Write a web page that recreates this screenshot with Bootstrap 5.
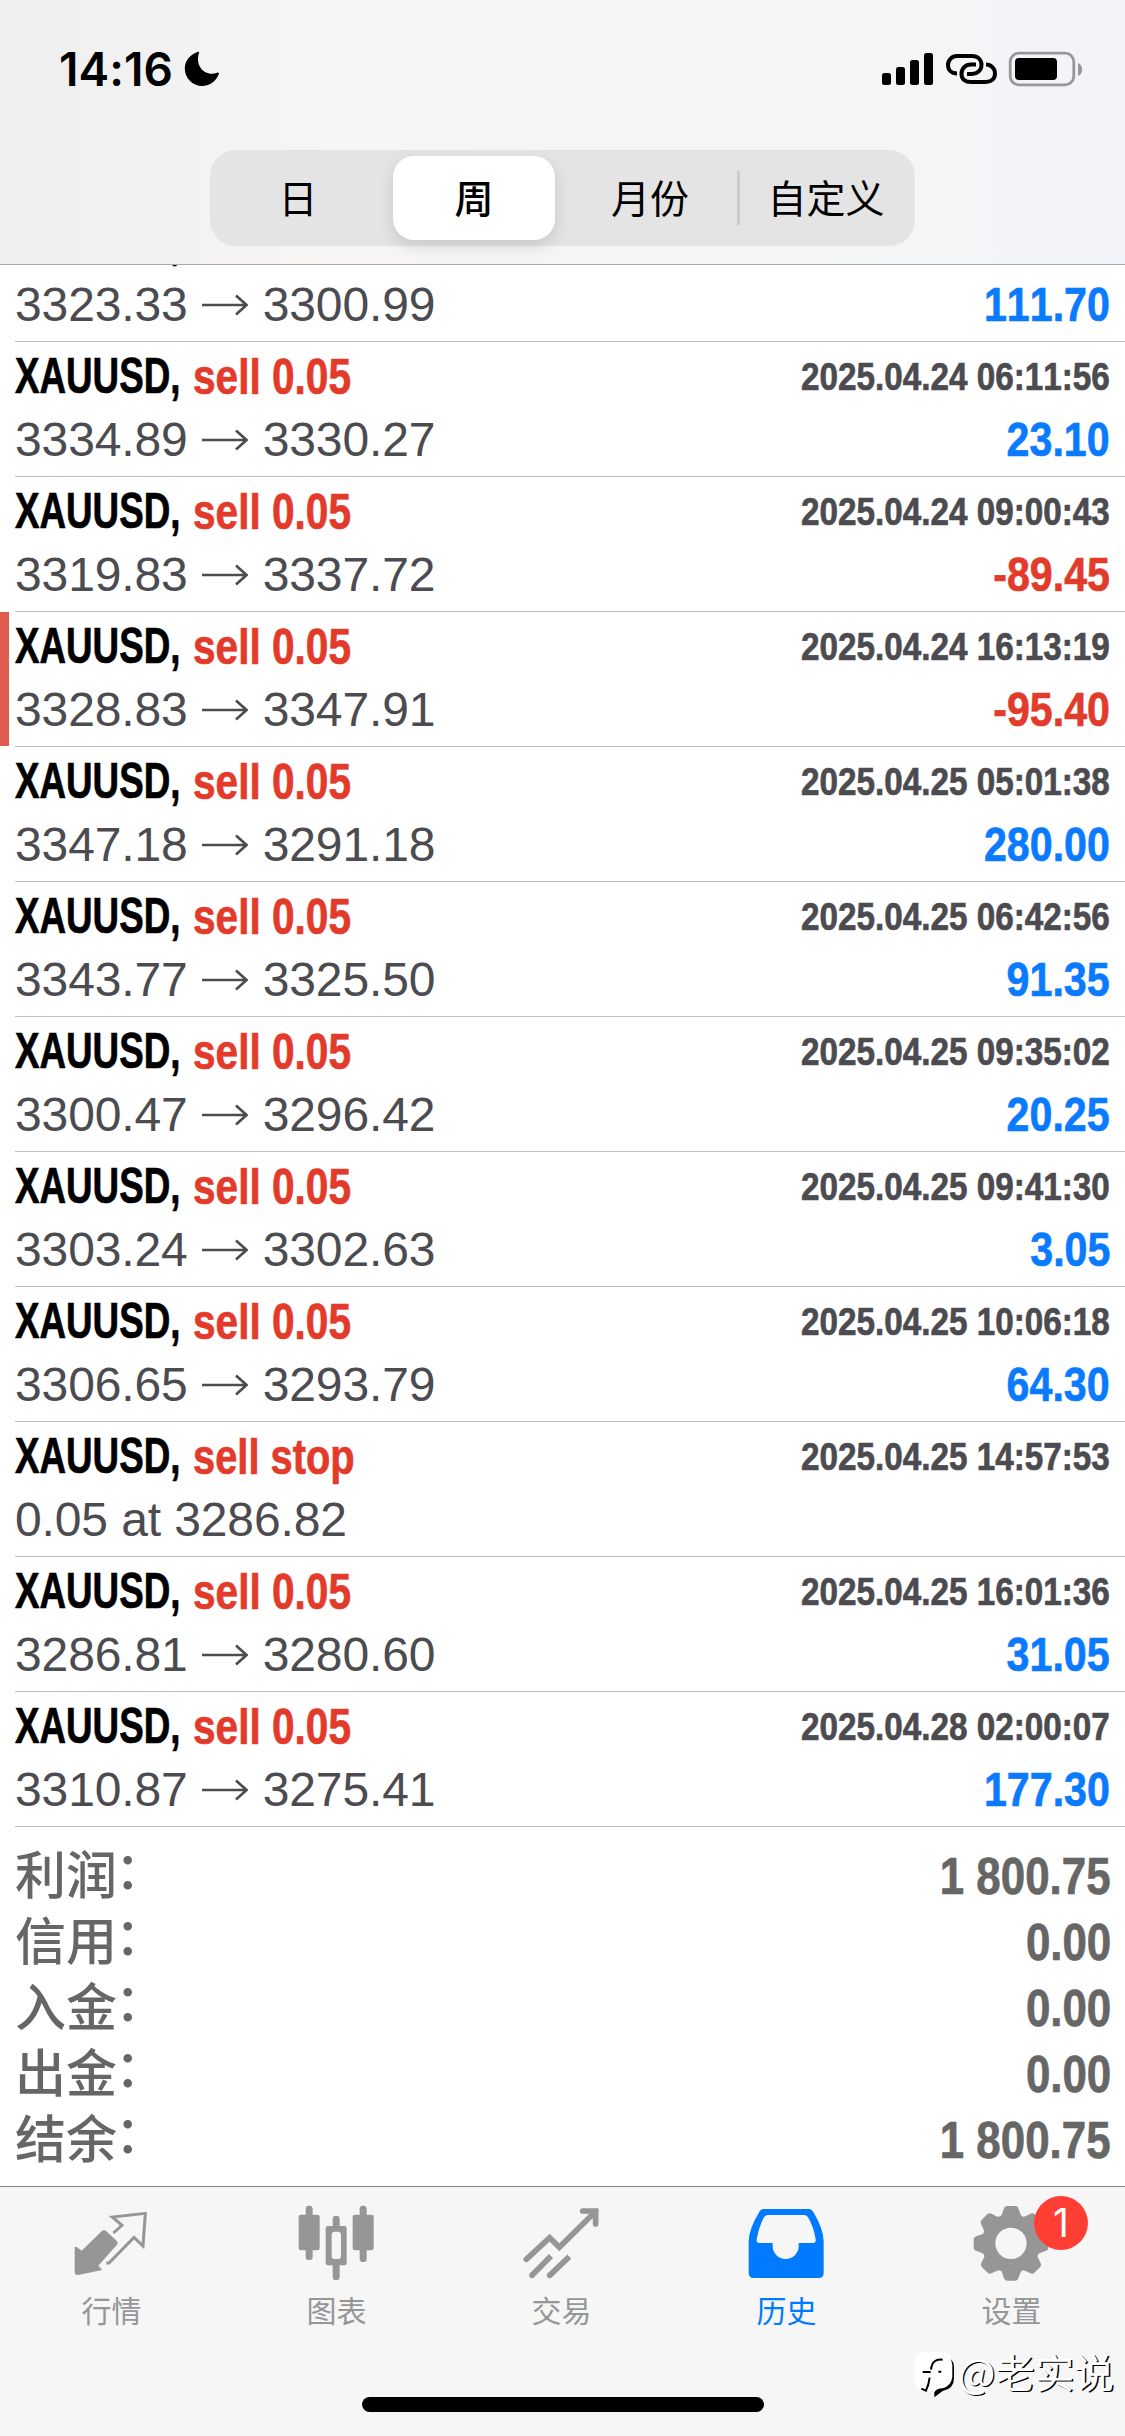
<!DOCTYPE html>
<html lang="zh-CN">
<head>
<meta charset="utf-8">
<meta name="viewport" content="width=device-width, initial-scale=1">
<title>历史</title>
<link rel="stylesheet" href="https://cdn.jsdelivr.net/npm/bootstrap@5.3.0/dist/css/bootstrap.min.css">
<style>
body{width:1125px;height:2436px;overflow:hidden;background:#fff;font-family:"Liberation Sans","Noto Sans CJK SC",sans-serif;color:#000}
svg{display:block;flex:none}
.top-bar{height:265px;border-bottom:1px solid #a9a9ac;background:linear-gradient(90deg,#efefef 0,#f2f1f1 14%,#f7f4f4 27%,#f6f5f5 42%,#f5f5f5 60%,#f4f5f6 80%,#f2f4f9 100%)}
.status-line{height:150px;padding:37px 42px 0 59px}
.clock{font:600 46px/64px Inter,sans-serif;width:125px;letter-spacing:.1px}
.moon{margin-top:14px}
.indicators{margin-top:12px}
.segments{width:705px;height:96px;border-radius:26px;background:#e5e4e5;font:39px/1 "Noto Sans CJK SC",sans-serif}
.segment{width:176px;height:84px;padding-bottom:4px;display:flex;align-items:center;justify-content:center}
.segment.chosen{width:162px;margin:0 7px;background:#fff;border-radius:21px;font-weight:500;box-shadow:0 6px 16px rgba(0,0,0,.13)}
.segment-rule{width:3px;height:54px;margin:0 -1.5px;background:#cbcbcd}
.deals{height:1921px;overflow:hidden}
.deal{height:135px;position:relative}
.deal-body{margin-left:15px;padding-right:15px;height:135px;border-bottom:1px solid #c0c0c2}
.deal.cut{margin-top:-58px}
.deal.flagged::before{content:"";position:absolute;left:0;top:0;width:9px;height:134px;background:#de5c4e}
.line-a{height:68px;line-height:69px}
.line-b{height:59px;line-height:59px}
.nar{display:inline-block;white-space:pre;font-weight:700;font-kerning:none;-webkit-text-stroke:.7px currentColor;transform-origin:0 50%}
.sym{width:178px;font-size:50px;transform:scaleX(.735)}
.side{font-size:49.5px;color:#e33b2b;transform:scaleX(.82)}
.side.pending{transform:scaleX(.805)}
.when{font-size:39.5px;color:#4b4b50;transform:scaleX(.842);transform-origin:100% 50%}
.gain,.loss{font-size:49px;color:#0a7aff;transform:scaleX(.84);transform-origin:100% 50%}
.loss{color:#e33b2b}
.prices{font-size:48px;color:#4b4b50;letter-spacing:-.12px}
.prices svg{margin:0 15px 0 14px}
.totals{padding:17px 14px 0 15px;color:#666}
.total{height:66px;line-height:66px;font-size:51px}
.total .nar{transform:scaleX(.86);transform-origin:100% 50%}
.total .name{font-weight:500;font-size:51px}
.colon{display:inline-block;transform:translate(-2px,-5px)}
.tab-bar{height:250px;border-top:1px solid #88888a;background:#f6f6f6;position:relative}
.tab{width:225px;padding-top:13px;padding-right:2px;color:#969696;font:30px/44px "Noto Sans CJK SC",sans-serif;position:relative;text-align:center}
.tab.current{color:#007aff}
.tab svg{margin:0 auto 2px}
.count{position:absolute;left:134px;top:9px;width:54px;height:54px;border-radius:50%;background:#ff3f34;color:#fff;font:400 39px/54px Inter,sans-serif}
.home{width:402px;height:15px;border-radius:8px;background:#000;position:absolute;left:362px;top:210px}
.author{position:absolute;left:914px;top:156px;height:56px;color:#fff;font:39.5px/56px "Noto Sans CJK SC",sans-serif;text-shadow:1.3px 1.3px 0 #000}
.author svg{margin:8px 2px 0 0}
</style>
</head>
<body>
<svg width="0" height="0" class="position-absolute"><symbol id="to" viewBox="0 0 46 24"><path d="M0 12H44M34 2.5L44.5 12L34 21.5" fill="none" stroke="#4b4b50" stroke-width="2.6"/></symbol></svg>

<header class="top-bar">
  <div class="status-line d-flex align-items-start">
    <div class="clock">14:16</div>
    <svg class="moon" width="36" height="36" viewBox="0 0 36 36"><path d="M14.5.8C6.500 3 .8 9.500.8 17.500C.8 27 8.500 35 18 35C26 35 32.500 30 35 22.500C34.700 21.600 34 21.400 33 21.800C22 26 10.500 16 15 2C15.300 1 15.200.6 14.500.8Z"/></svg>
    <svg class="indicators ms-auto" width="202" height="40" viewBox="881 49 202 40">
      <g><rect x="882" y="73" width="9" height="12" rx="2.500"/><rect x="896" y="67" width="9" height="18" rx="2.500"/><rect x="910" y="60" width="9" height="25" rx="2.500"/><rect x="924" y="53" width="9" height="32" rx="2.500"/></g>
      <g fill="none" stroke="#000" stroke-width="4"><path d="M957 73.500C951.500 73.500 948 70 948 65C948 60 952 56 957 56H972C978 56 981.500 60 981.500 65C981.500 70.500 977 74 972 74H967"/><path d="M986 64.500C991 64.500 995 68.500 995 73.500C995 79 991 82 986 82H971C965 82 961.500 79 961.500 74C961.500 68.500 965.500 64.500 971 64.500H976"/></g>
      <rect x="1010.200" y="53.200" width="63.600" height="31.600" rx="8.500" fill="none" stroke="#98989b" stroke-width="2.800"/><rect x="1015" y="58" width="42" height="22" rx="4"/><path d="M1078 63C1083.500 65 1083.500 74 1078 76Z" fill="#98989b"/>
    </svg>
  </div>
  <div class="segments d-flex align-items-center mx-auto">
    <div class="segment">日</div><div class="segment chosen">周</div><div class="segment">月份</div><div class="segment-rule"></div><div class="segment">自定义</div>
  </div>
</header>

<main class="deals">
  <div class="deal cut"><div class="deal-body">
    <div class="line-a d-flex"><span class="nar sym">XAUUSD,</span></div>
    <div class="line-b d-flex justify-content-between"><div class="prices d-flex align-items-center">3323.33<svg width="46" height="24"><use href="#to"/></svg>3300.99</div><span class="nar gain">111.70</span></div>
  </div></div>
  <div class="deal"><div class="deal-body">
    <div class="line-a d-flex"><span class="nar sym">XAUUSD,</span><span class="nar side">sell 0.05</span><span class="nar when ms-auto">2025.04.24 06:11:56</span></div>
    <div class="line-b d-flex justify-content-between"><div class="prices d-flex align-items-center">3334.89<svg width="46" height="24"><use href="#to"/></svg>3330.27</div><span class="nar gain">23.10</span></div>
  </div></div>
  <div class="deal"><div class="deal-body">
    <div class="line-a d-flex"><span class="nar sym">XAUUSD,</span><span class="nar side">sell 0.05</span><span class="nar when ms-auto">2025.04.24 09:00:43</span></div>
    <div class="line-b d-flex justify-content-between"><div class="prices d-flex align-items-center">3319.83<svg width="46" height="24"><use href="#to"/></svg>3337.72</div><span class="nar loss">-89.45</span></div>
  </div></div>
  <div class="deal flagged"><div class="deal-body">
    <div class="line-a d-flex"><span class="nar sym">XAUUSD,</span><span class="nar side">sell 0.05</span><span class="nar when ms-auto">2025.04.24 16:13:19</span></div>
    <div class="line-b d-flex justify-content-between"><div class="prices d-flex align-items-center">3328.83<svg width="46" height="24"><use href="#to"/></svg>3347.91</div><span class="nar loss">-95.40</span></div>
  </div></div>
  <div class="deal"><div class="deal-body">
    <div class="line-a d-flex"><span class="nar sym">XAUUSD,</span><span class="nar side">sell 0.05</span><span class="nar when ms-auto">2025.04.25 05:01:38</span></div>
    <div class="line-b d-flex justify-content-between"><div class="prices d-flex align-items-center">3347.18<svg width="46" height="24"><use href="#to"/></svg>3291.18</div><span class="nar gain">280.00</span></div>
  </div></div>
  <div class="deal"><div class="deal-body">
    <div class="line-a d-flex"><span class="nar sym">XAUUSD,</span><span class="nar side">sell 0.05</span><span class="nar when ms-auto">2025.04.25 06:42:56</span></div>
    <div class="line-b d-flex justify-content-between"><div class="prices d-flex align-items-center">3343.77<svg width="46" height="24"><use href="#to"/></svg>3325.50</div><span class="nar gain">91.35</span></div>
  </div></div>
  <div class="deal"><div class="deal-body">
    <div class="line-a d-flex"><span class="nar sym">XAUUSD,</span><span class="nar side">sell 0.05</span><span class="nar when ms-auto">2025.04.25 09:35:02</span></div>
    <div class="line-b d-flex justify-content-between"><div class="prices d-flex align-items-center">3300.47<svg width="46" height="24"><use href="#to"/></svg>3296.42</div><span class="nar gain">20.25</span></div>
  </div></div>
  <div class="deal"><div class="deal-body">
    <div class="line-a d-flex"><span class="nar sym">XAUUSD,</span><span class="nar side">sell 0.05</span><span class="nar when ms-auto">2025.04.25 09:41:30</span></div>
    <div class="line-b d-flex justify-content-between"><div class="prices d-flex align-items-center">3303.24<svg width="46" height="24"><use href="#to"/></svg>3302.63</div><span class="nar gain">3.05</span></div>
  </div></div>
  <div class="deal"><div class="deal-body">
    <div class="line-a d-flex"><span class="nar sym">XAUUSD,</span><span class="nar side">sell 0.05</span><span class="nar when ms-auto">2025.04.25 10:06:18</span></div>
    <div class="line-b d-flex justify-content-between"><div class="prices d-flex align-items-center">3306.65<svg width="46" height="24"><use href="#to"/></svg>3293.79</div><span class="nar gain">64.30</span></div>
  </div></div>
  <div class="deal"><div class="deal-body">
    <div class="line-a d-flex"><span class="nar sym">XAUUSD,</span><span class="nar side pending">sell stop</span><span class="nar when ms-auto">2025.04.25 14:57:53</span></div>
    <div class="line-b d-flex"><div class="prices">0.05 at 3286.82</div></div>
  </div></div>
  <div class="deal"><div class="deal-body">
    <div class="line-a d-flex"><span class="nar sym">XAUUSD,</span><span class="nar side">sell 0.05</span><span class="nar when ms-auto">2025.04.25 16:01:36</span></div>
    <div class="line-b d-flex justify-content-between"><div class="prices d-flex align-items-center">3286.81<svg width="46" height="24"><use href="#to"/></svg>3280.60</div><span class="nar gain">31.05</span></div>
  </div></div>
  <div class="deal"><div class="deal-body">
    <div class="line-a d-flex"><span class="nar sym">XAUUSD,</span><span class="nar side">sell 0.05</span><span class="nar when ms-auto">2025.04.28 02:00:07</span></div>
    <div class="line-b d-flex justify-content-between"><div class="prices d-flex align-items-center">3310.87<svg width="46" height="24"><use href="#to"/></svg>3275.41</div><span class="nar gain">177.30</span></div>
  </div></div>
  <div class="totals">
    <div class="total d-flex justify-content-between"><span class="name">利润<span class="colon">：</span></span><span class="nar">1 800.75</span></div>
    <div class="total d-flex justify-content-between"><span class="name">信用<span class="colon">：</span></span><span class="nar">0.00</span></div>
    <div class="total d-flex justify-content-between"><span class="name">入金<span class="colon">：</span></span><span class="nar">0.00</span></div>
    <div class="total d-flex justify-content-between"><span class="name">出金<span class="colon">：</span></span><span class="nar">0.00</span></div>
    <div class="total d-flex justify-content-between"><span class="name">结余<span class="colon">：</span></span><span class="nar">1 800.75</span></div>
  </div>
</main>

<nav class="tab-bar">
  <div class="d-flex">
    <div class="tab">
      <svg width="90" height="85" viewBox="202 90 270 255"><path d="M230 232L246 243L307 184Q313 179 319 184L350 212Q356 218 351 224L295 287L306 299L235 314Q226 315 226 307V231Z" fill="currentColor" stroke="currentColor" stroke-width="2"/><path d="M341 189L367 166L338 141L437 130L430 228L403 202L328 279H320" fill="none" stroke="currentColor" stroke-width="9"/></svg>行情
    </div>
    <div class="tab">
      <svg width="90" height="85" viewBox="877 90 270 255" fill="currentColor"><rect x="918" y="107" width="21" height="163" rx="10"/><rect x="897" y="134" width="63" height="107" rx="7"/><rect x="999" y="137" width="21" height="193" rx="10"/><rect x="978" y="168" width="63" height="118" rx="7"/><rect x="996" y="185" width="28" height="82" rx="10" fill="#f6f6f6"/><rect x="1080" y="107" width="21" height="169" rx="10"/><rect x="1059" y="134" width="63" height="107" rx="7"/></svg>图表
    </div>
    <div class="tab">
      <svg width="90" height="85" viewBox="292 90 270 255" fill="none" stroke="currentColor" stroke-width="17" stroke-linejoin="miter"><path d="M320 268L390 203L419 232L527 125" stroke-linecap="round"/><path d="M489 123H528V162" stroke-linecap="round"/><path d="M337 316L394 258M390 316L449 260"/><circle cx="337" cy="316" r="8.500" fill="currentColor" stroke="none"/><circle cx="390" cy="316" r="8.500" fill="currentColor" stroke="none"/></svg>交易
    </div>
    <div class="tab current">
      <svg width="90" height="85" viewBox="967 90 270 255"><path fill="currentColor" fill-rule="evenodd" d="M1032 117H1168Q1176 117 1181 126Q1212 178 1212 215V308Q1212 324 1197 324H1002Q987 324 987 308V215Q987 178 1020 124Q1024 117 1032 117ZM1044 135Q1036 135 1032 143Q1018 170 1011 208Q1010 219 1018 219H1059V228A39 39 0 0 0 1137 228V219H1181Q1189 219 1188 208Q1182 170 1166 143Q1162 135 1154 135Z"/></svg>历史
    </div>
    <div class="tab">
      <svg width="90" height="85" viewBox="442 90 270 255"><g fill="currentColor"><circle cx="574" cy="220" r="88"/><path id="tooth" d="M540 143C553 132 548 108 563 108H587C600 108 597 132 610 143L600 180H550ZM540 297C553 308 548 332 563 332H587C600 332 597 308 610 297L600 260H550Z"/><use href="#tooth" transform="rotate(45 574 220)"/><use href="#tooth" transform="rotate(90 574 220)"/><use href="#tooth" transform="rotate(135 574 220)"/></g><circle cx="574" cy="220" r="47" fill="#f6f6f6"/></svg>设置<span class="count">1</span>
    </div>
  </div>
  <div class="home"></div>
  <div class="author d-flex align-items-center">
    <svg width="42" height="48" viewBox="280 548 126 144"><path d="M310 552H362Q399 552 399 590V630Q399 664 366 668H358L340 686L342 668H322L318 666H304Q282 660 282 640V580Q282 552 310 552Z" fill="#fff"/><path d="M391 572Q400 582 400 596V630Q400 662 366 668L341 687V672Q348 660 366 660Q392 652 395 625V590Z"/><path d="M306 611H330M366 574Q334 570 331 604M327 628Q324 650 316 667L302 661M353 610H362" fill="none" stroke="#000" stroke-width="6"/></svg><span>@老实说</span>
  </div>
</nav>
<script src="https://cdn.jsdelivr.net/npm/bootstrap@5.3.0/dist/js/bootstrap.bundle.min.js"></script>
</body>
</html>
